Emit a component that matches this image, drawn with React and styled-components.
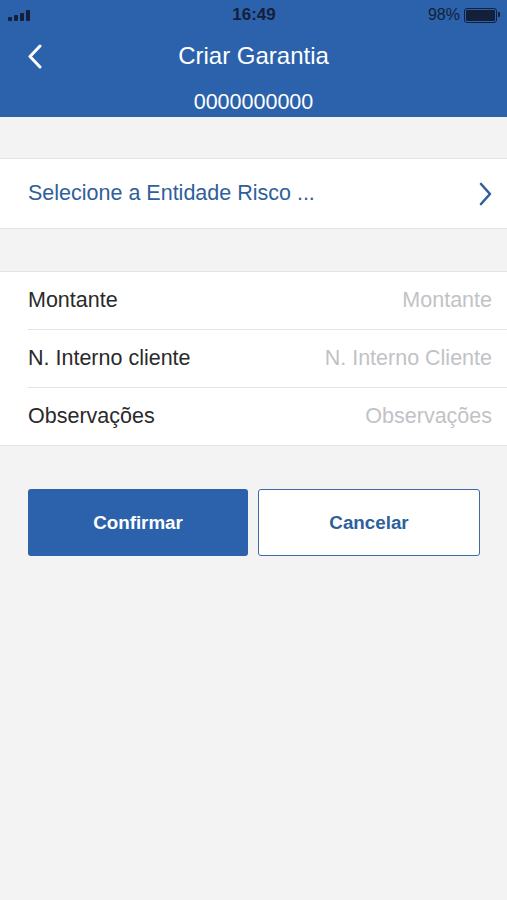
import React from 'react';
import styled, { createGlobalStyle } from 'styled-components';

const GlobalStyle = createGlobalStyle`
  html, body {
    margin: 0;
    padding: 0;
    background: #f3f3f3;
    font-family: "Liberation Sans", Arial, sans-serif;
  }
`;

const Page = styled.div`
  width: 507px;
  min-height: 900px;
  background: #f3f3f3;
`;

const Header = styled.header`
  background: #2b62ab;
  height: 117px;
  display: flex;
  flex-direction: column;
`;

const StatusBar = styled.div`
  height: 30px;
  display: grid;
  grid-template-columns: 1fr auto 1fr;
  align-items: center;
  padding: 0 7px 0 8px;
  color: #14203a;
  font-size: 16px;
  font-weight: bold;
`;

const Signal = styled.div`
  display: flex;
  align-items: flex-end;
  gap: 2px;
  height: 11px;
`;

const SignalBar = styled.span`
  width: 4px;
  height: ${(p) => p.h}px;
  background: #14203a;
  border-radius: 1px;
`;

const Time = styled.span`
  font-size: 17px;
`;

const Battery = styled.div`
  justify-self: end;
  display: flex;
  align-items: center;
  gap: 4px;
  font-weight: normal;
  font-size: 16px;
`;

const BatteryBody = styled.span`
  width: 29px;
  height: 11px;
  border: 1.5px solid #14203a;
  border-radius: 3px;
  padding: 1px;
  display: flex;
  position: relative;
  margin-right: 3px;
  &::after {
    content: '';
    position: absolute;
    right: -4px;
    top: 3px;
    width: 2px;
    height: 5px;
    background: #14203a;
    border-radius: 0 1px 1px 0;
  }
`;

const BatteryFill = styled.span`
  flex: 1;
  background: #14203a;
  border-radius: 1px;
`;

const NavRow = styled.div`
  height: 52px;
  display: grid;
  grid-template-columns: 60px 1fr 60px;
  align-items: center;
`;

const BackButton = styled.button`
  background: none;
  border: none;
  padding: 0 0 0 27px;
  display: flex;
  align-items: center;
  cursor: pointer;
`;

const Title = styled.h1`
  margin: 0;
  text-align: center;
  color: #fff;
  font-size: 24px;
  font-weight: normal;
`;

const Subtitle = styled.div`
  text-align: center;
  color: #fff;
  font-size: 21.5px;
  padding-top: 8px;
`;

const Section = styled.section`
  background: #fff;
  border-top: 1px solid #e4e4e4;
  border-bottom: 1px solid #e4e4e4;
  margin-top: ${(p) => p.top}px;
`;

const LinkRow = styled.div`
  height: 69px;
  display: flex;
  align-items: center;
  justify-content: space-between;
  padding: 0 14px 0 28px;
  color: #2f5f9c;
  font-size: 21.5px;
`;

const FieldRow = styled.div`
  height: 57px;
  display: flex;
  align-items: center;
  justify-content: space-between;
  margin-left: 28px;
  padding-right: 15px;
  & + & {
    border-top: 1px solid #e4e4e4;
  }
`;

const Label = styled.span`
  color: #2a2a2a;
  font-size: 21.5px;
`;

const Input = styled.input`
  border: none;
  outline: none;
  background: transparent;
  text-align: right;
  font-family: inherit;
  font-size: 21.5px;
  color: #2a2a2a;
  width: 240px;
  padding: 0;
  &::placeholder {
    color: #c2c2c6;
  }
`;

const Actions = styled.div`
  display: flex;
  gap: 10px;
  padding: 43px 27px 0 28px;
`;

const Button = styled.button`
  flex: 1;
  height: 67px;
  border-radius: 3px;
  font-family: inherit;
  font-size: 18.8px;
  font-weight: bold;
  cursor: pointer;
  background: ${(p) => (p.primary ? '#2b62ab' : '#fff')};
  color: ${(p) => (p.primary ? '#fff' : '#2f5f9c')};
  border: ${(p) => (p.primary ? 'none' : '1.5px solid #3d6aa6')};
`;

function App() {
  return (
    <Page>
      <GlobalStyle />
      <Header>
        <StatusBar>
          <Signal>
            <SignalBar h={4} />
            <SignalBar h={6} />
            <SignalBar h={8} />
            <SignalBar h={11} />
          </Signal>
          <Time>16:49</Time>
          <Battery>
            98%
            <BatteryBody>
              <BatteryFill />
            </BatteryBody>
          </Battery>
        </StatusBar>
        <NavRow>
          <BackButton aria-label="Voltar">
            <svg width="15" height="25" viewBox="0 0 15 25">
              <path d="M13 2 L3 12.5 L13 23" fill="none" stroke="#fff" strokeWidth="3" strokeLinecap="round" strokeLinejoin="round" />
            </svg>
          </BackButton>
          <Title>Criar Garantia</Title>
          <span />
        </NavRow>
        <Subtitle>0000000000</Subtitle>
      </Header>

      <Section top={41}>
        <LinkRow>
          <span>Selecione a Entidade Risco ...</span>
          <svg width="14" height="24" viewBox="0 0 14 24">
            <path d="M2 2 L11 12 L2 22" fill="none" stroke="#2f5f9c" strokeWidth="2.6" strokeLinecap="round" strokeLinejoin="round" />
          </svg>
        </LinkRow>
      </Section>

      <Section top={42}>
        <FieldRow>
          <Label>Montante</Label>
          <Input placeholder="Montante" />
        </FieldRow>
        <FieldRow>
          <Label>N. Interno cliente</Label>
          <Input placeholder="N. Interno Cliente" />
        </FieldRow>
        <FieldRow>
          <Label>Observações</Label>
          <Input placeholder="Observações" />
        </FieldRow>
      </Section>

      <Actions>
        <Button primary>Confirmar</Button>
        <Button>Cancelar</Button>
      </Actions>
    </Page>
  );
}

export default App;
